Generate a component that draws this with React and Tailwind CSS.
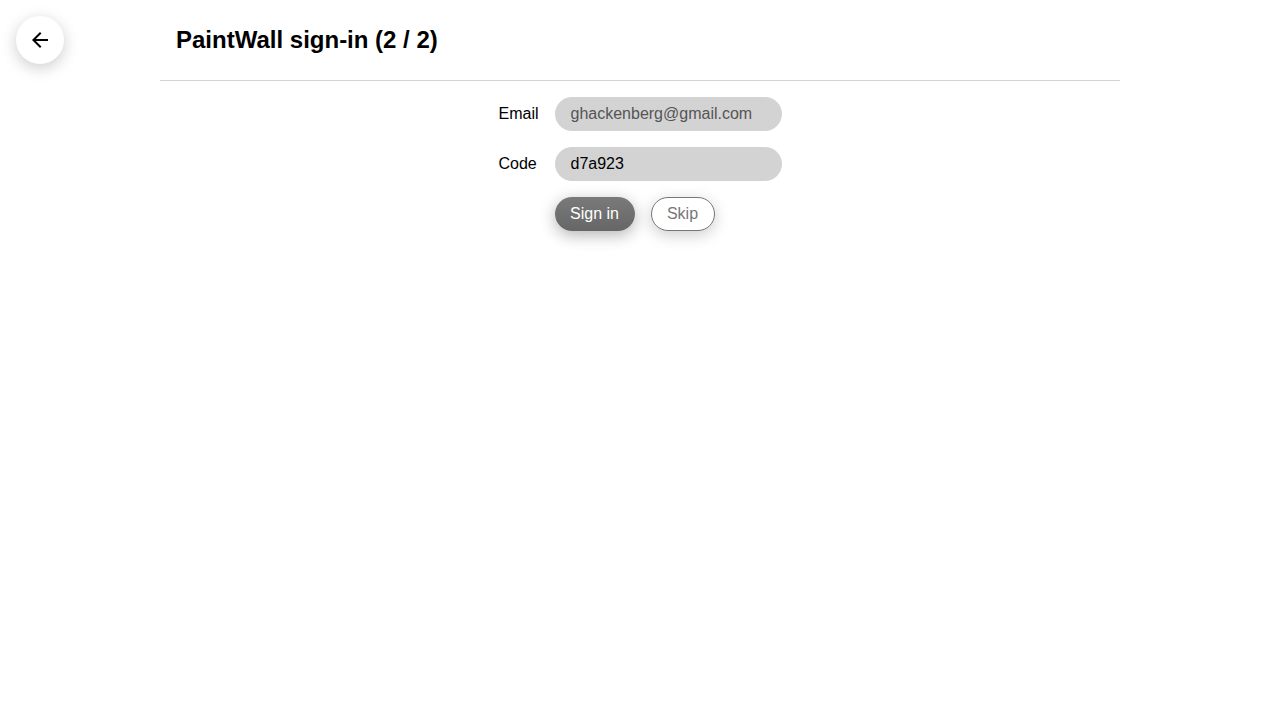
export default function App() {
  return (
    <div className="min-h-[720px] bg-white text-black" style={{ fontFamily: '"Liberation Sans", Arial, sans-serif' }}>
      <button className="absolute left-4 top-4 flex h-12 w-12 items-center justify-center rounded-full bg-white shadow-[0_4px_16px_rgba(0,0,0,0.2)]">
        <svg width="24" height="24" viewBox="0 0 24 24" fill="black">
          <path d="M20 11H7.83l5.59-5.59L12 4l-8 8 8 8 1.41-1.41L7.83 13H20v-2z" />
        </svg>
      </button>
      <div className="mx-auto w-[960px]">
        <div className="flex h-[81px] items-center border-b border-[#d3d3d3] px-4">
          <h1 className="text-[24px] font-bold leading-none">PaintWall sign-in (2 / 2)</h1>
        </div>
        <div className="mt-4 flex justify-center">
          <div className="grid grid-cols-[auto_227px] items-center gap-x-4 gap-y-4 text-[16px]">
            <div className="text-left">Email</div>
            <div className="flex h-[34px] items-center rounded-full bg-[#d3d3d3] px-4 text-[#555]">ghackenberg@gmail.com</div>
            <div className="text-left">Code</div>
            <div className="flex h-[34px] items-center rounded-full bg-[#d3d3d3] px-4 text-black">d7a923</div>
            <div></div>
            <div className="flex gap-4">
              <button className="flex h-[34px] w-[80px] items-center justify-center rounded-full bg-gradient-to-b from-[#7a7a7a] to-[#666] text-white shadow-[0_4px_16px_rgba(0,0,0,0.3)]">Sign in</button>
              <button className="flex h-[34px] w-[64px] items-center justify-center rounded-full border border-[#777] bg-white text-[#777] shadow-[0_4px_16px_rgba(0,0,0,0.2)]">Skip</button>
            </div>
          </div>
        </div>
      </div>
    </div>
  );
}
